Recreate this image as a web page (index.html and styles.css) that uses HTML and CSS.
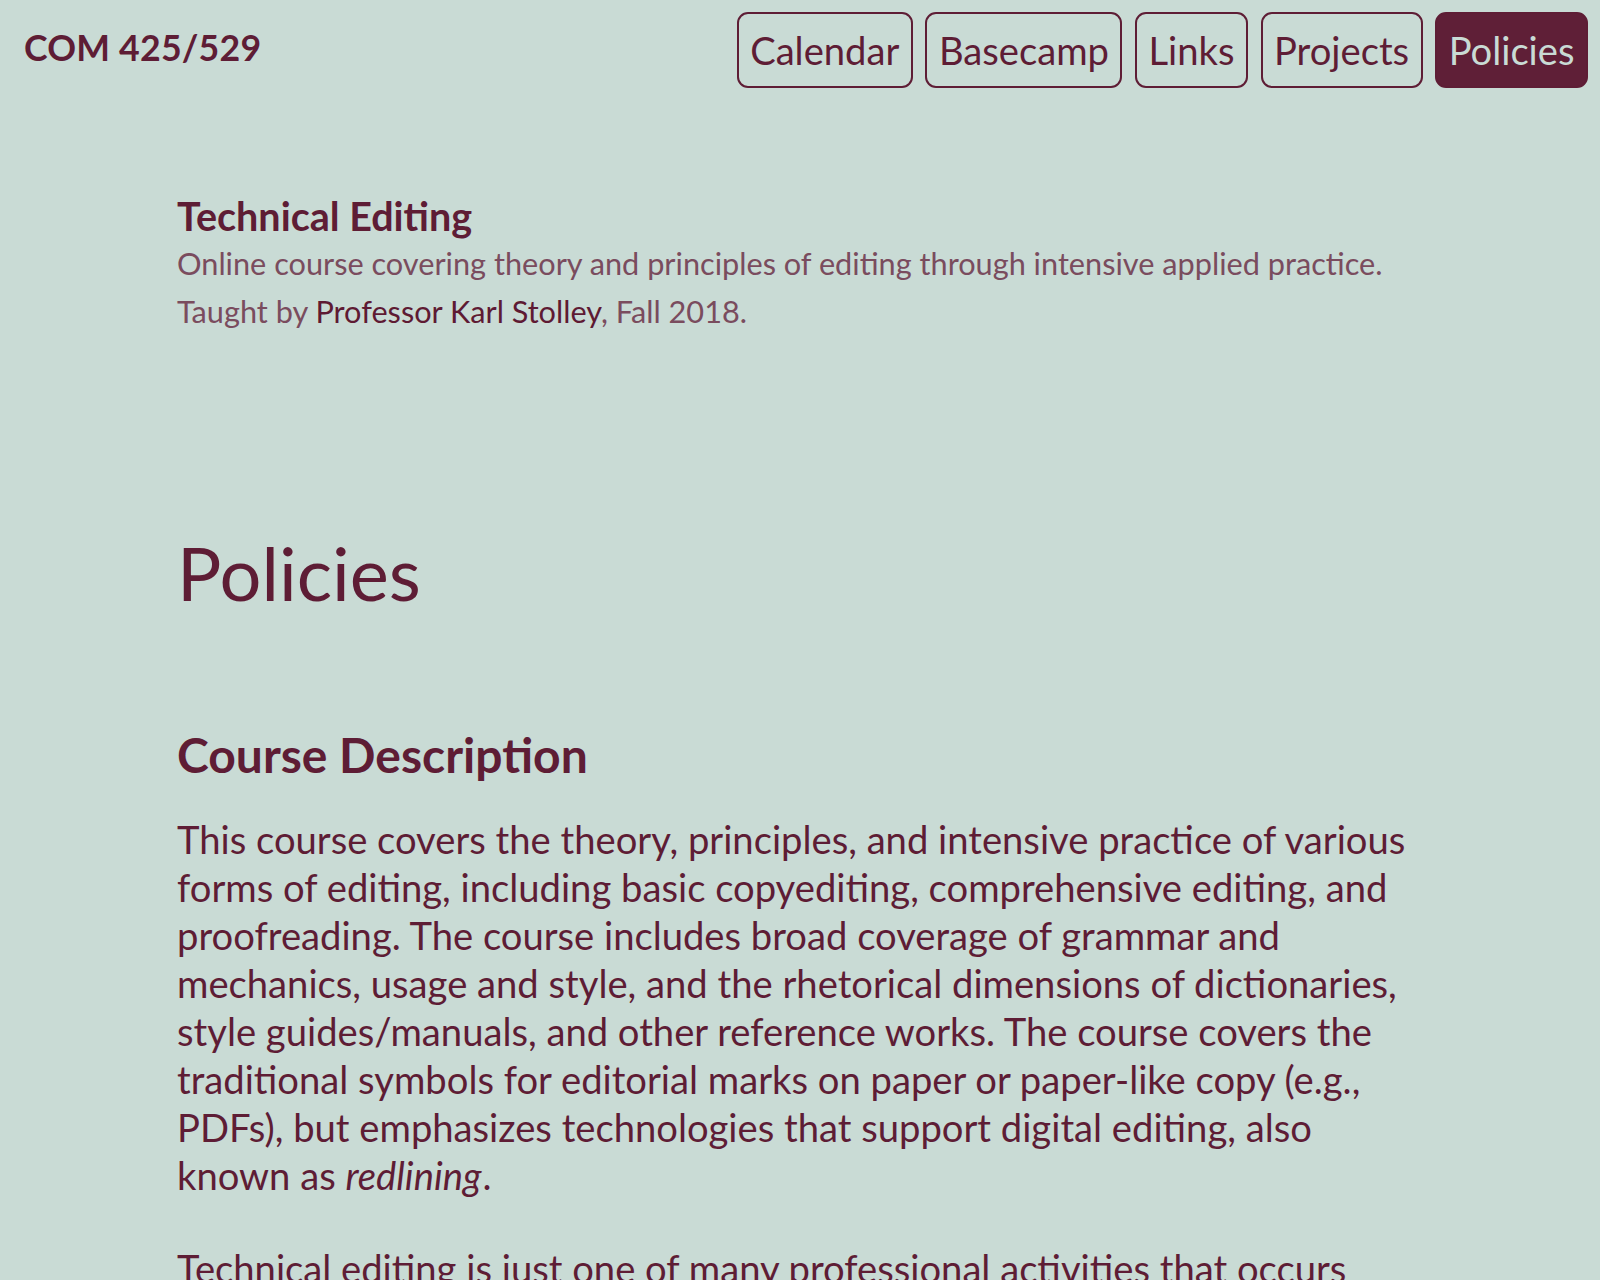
FILE: index.html
```html
<!DOCTYPE html>
<html lang="en">
<head>
<meta charset="utf-8">
<title>Policies | COM 425/529</title>
<link rel="stylesheet" href="styles.css">
</head>
<body>
<header class="site-header">
  <a class="site-title" href="#">COM 425/529</a>
  <nav class="site-nav">
    <a class="nav-link" href="#">Calendar</a>
    <a class="nav-link" href="#">Basecamp</a>
    <a class="nav-link" href="#">Links</a>
    <a class="nav-link" href="#">Projects</a>
    <a class="nav-link nav-link--current" href="#">Policies</a>
  </nav>
</header>
<main class="page">
  <section class="course-info">
    <h2 class="course-name">Technical Editing</h2>
    <p class="course-summary">Online course covering theory and principles of editing through intensive applied practice.</p>
    <p class="course-summary">Taught by <a class="instructor" href="#">Professor Karl Stolley</a>, Fall 2018.</p>
  </section>
  <h1 class="page-title">Policies</h1>
  <h2 class="section-title">Course Description</h2>
  <p class="body-text">This course covers the theory, principles, and intensive practice of various forms of editing, including basic copyediting, comprehensive editing, and proofreading. The course includes broad coverage of grammar and mechanics, usage and style, and the rhetorical dimensions of dictionaries, style guides/manuals, and other reference works. The course covers the traditional symbols for editorial marks on paper or paper-like copy (e.g., PDFs), but emphasizes technologies that support digital editing, also known as <em>redlining</em>.</p>
  <p class="body-text">Technical editing is just one of many professional activities that occurs within the broader context of technical communication. This course therefore situates editing among the other activities that technical communicators perform.</p>
</main>
</body>
</html>
```
FILE: styles.css
```css
html {
  background: #c9dbd5;
}
body {
  margin: 0;
  background: #c9dbd5;
  color: #5e1d35;
  font-family: Lato, "Noto Sans", sans-serif;
  font-size: 38.2px;
  line-height: 48px;
}
a {
  color: inherit;
  text-decoration: none;
}
.site-header {
  display: flex;
  justify-content: space-between;
  align-items: flex-start;
  padding: 12px 12px 0 24px;
}
.site-title {
  font-weight: 700;
  font-size: 35.7px;
  line-height: 48px;
  margin-top: 12px;
  letter-spacing: 0.2px;
}
.site-nav {
  display: flex;
  gap: 12.5px;
}
.nav-link {
  display: block;
  border: 2px solid #5e1d35;
  border-radius: 11px;
  padding: 12px 11.5px;
  line-height: 48px;
  height: 76px;
  box-sizing: border-box;
}
.nav-link--current {
  background: #5f1f37;
  color: #c9dbd5;
}
.page {
  max-width: 1246px;
  margin: 0 auto;
  padding-bottom: 80px;
}
.course-info {
  margin-top: 104px;
}
.course-name {
  margin: 0;
  font-size: 39.5px;
  font-weight: 700;
  line-height: 48px;
}
.course-summary {
  margin: 0;
  font-size: 30.7px;
  line-height: 48px;
  color: #7a4c5e;
}
.instructor {
  color: #5e1a33;
}
.page-title {
  margin: 191px 0 0;
  font-size: 74px;
  font-weight: 400;
  line-height: 92px;
}
.section-title {
  margin: 108px 0 0;
  font-size: 48px;
  font-weight: 700;
  line-height: 56px;
}
.body-text {
  margin: 32px 0 45px;
}
.body-text em {
  font-style: italic;
  padding-right: 1px;
}
```
